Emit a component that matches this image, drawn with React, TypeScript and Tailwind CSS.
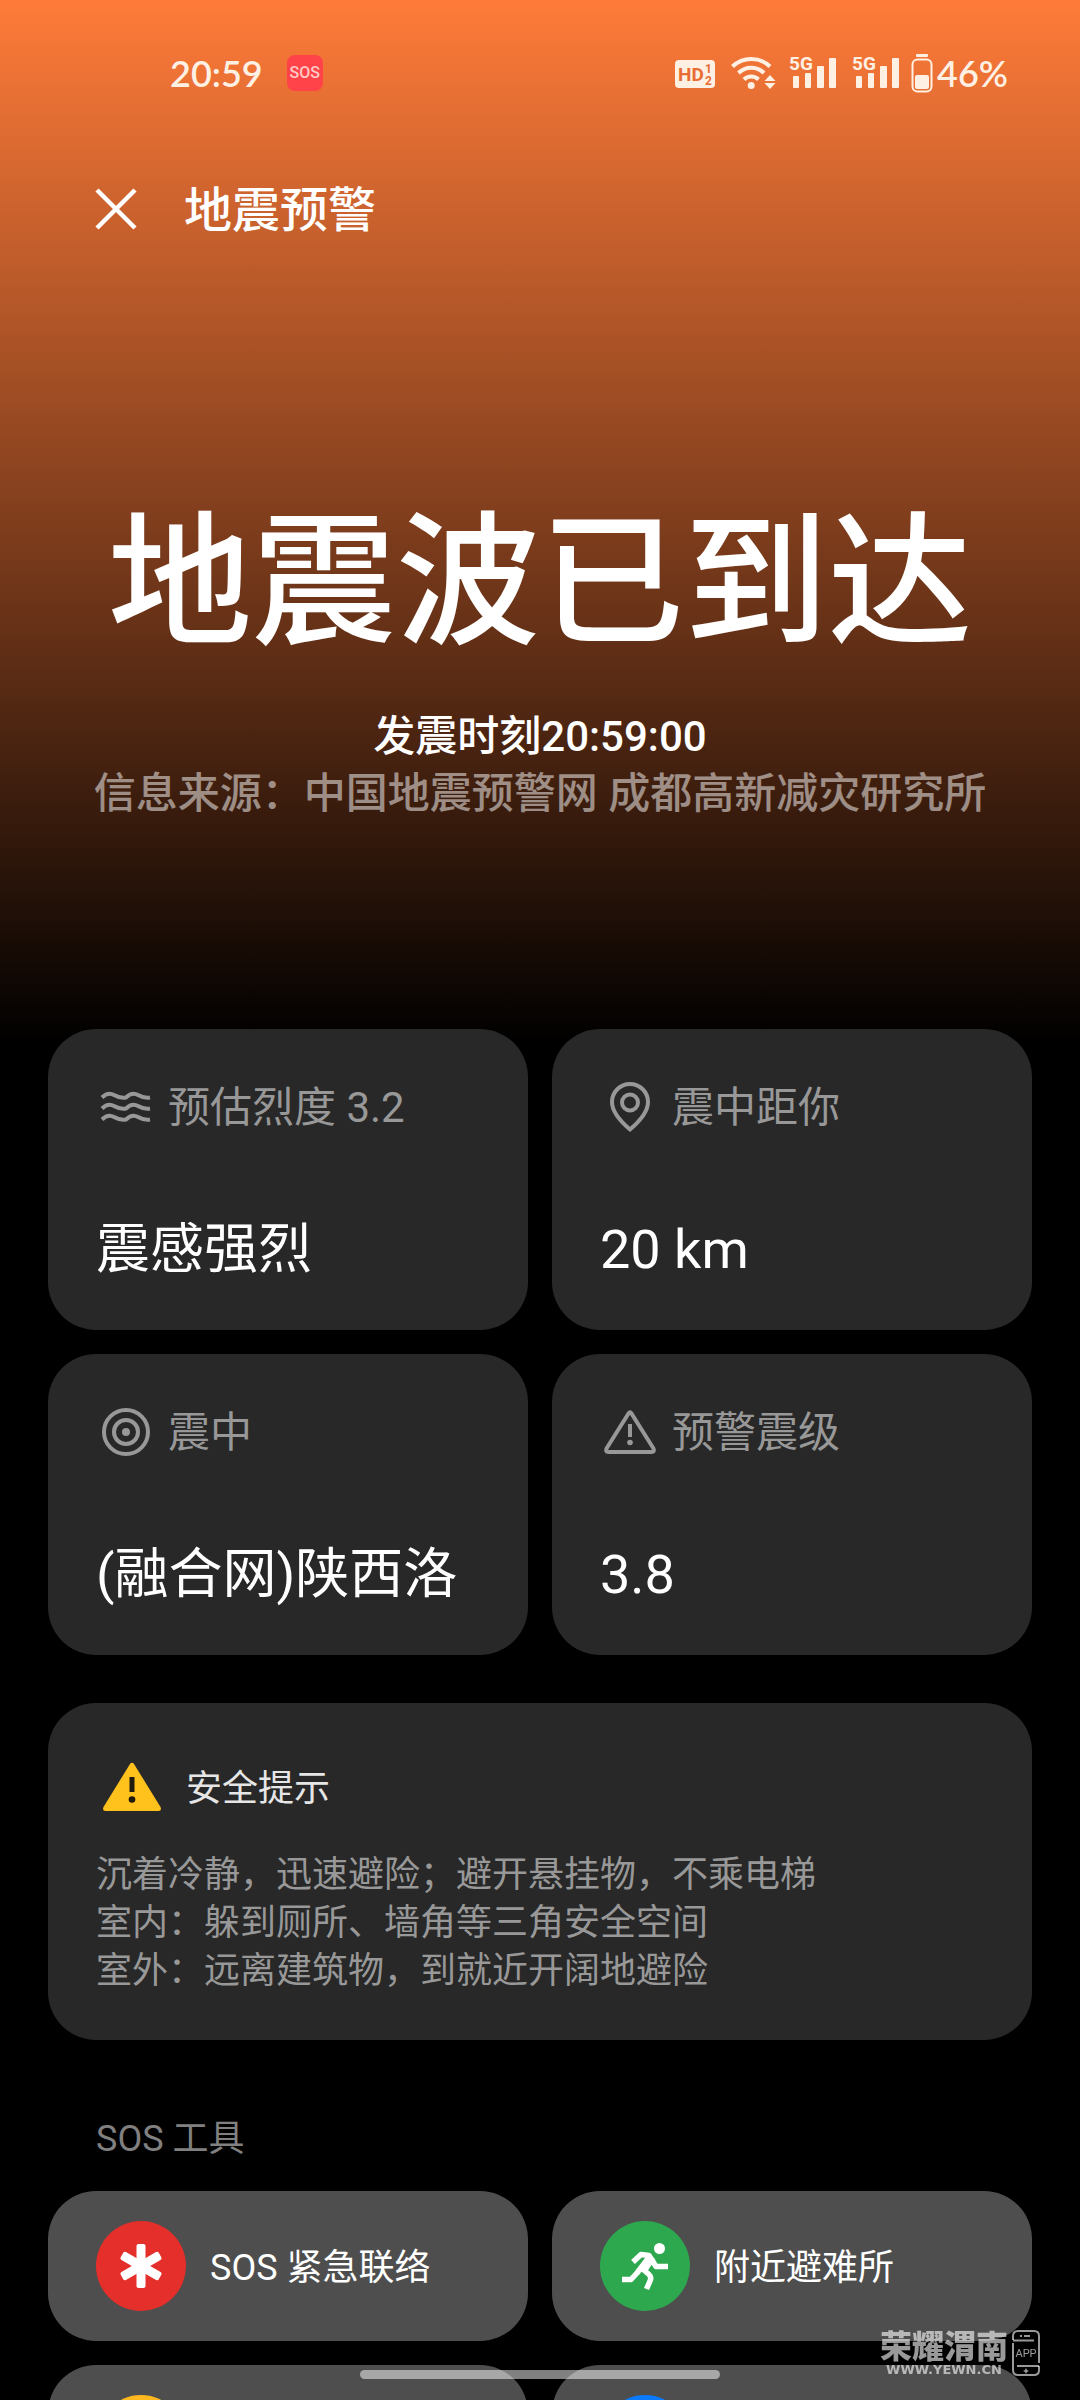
import type { ReactNode } from "react";

const StatusBar = () => (
  <div className="flex items-center justify-between h-36 pt-[2px] pl-[170px] pr-[72px] text-[#fff0e4] font-['Lato',sans-serif] text-4xl font-semibold">
    <div className="flex items-center gap-6">
      <span>20:59</span>
      <span className="flex items-center justify-center size-9 rounded-lg bg-[#ff4348] text-[#ffc9c4] text-base font-medium font-['Roboto',sans-serif]">
        SOS
      </span>
    </div>
    <div className="flex items-center">
      <HdIcon />
      <WifiIcon />
      <SignalIcon />
      <SignalIcon />
      <BatteryIcon />
      <span className="ml-1">46%</span>
    </div>
  </div>
);

const HdIcon = () => (
  <svg width="40" height="40" viewBox="0 0 40 40" className="mr-4">
    <rect x="0" y="7" width="40" height="28" rx="4" fill="currentColor" />
    <g fill="#e96d33" fontFamily="Roboto, sans-serif" fontWeight="700">
      <text x="3" y="28" fontSize="19">HD</text>
      <text x="30" y="20" fontSize="12">1</text>
      <text x="30" y="32" fontSize="12">2</text>
    </g>
  </svg>
);

const WifiIcon = () => (
  <svg width="46" height="40" viewBox="0 0 46 40" fill="none" className="mr-3">
    <g stroke="currentColor" strokeWidth="4">
      <path d="M1.500 13.500a27 27 0 0 1 37.500 0" />
      <path d="M7.500 20a18 18 0 0 1 25.500 0" />
      <path d="M13 26.500a10 10 0 0 1 14.500 0" />
    </g>
    <circle cx="20.200" cy="32.500" r="3.500" fill="currentColor" />
    <path d="M39 22l5.500 6h-11zM39 36l5.500-6h-11z" fill="currentColor" />
  </svg>
);

const SignalIcon = () => (
  <svg width="48" height="40" viewBox="0 0 48 40" className="mr-[15px]">
    <text x="0" y="17" fontSize="19" fontFamily="Roboto, sans-serif" fontWeight="700" fill="currentColor">
      5G
    </text>
    <g fill="currentColor">
      <rect x="4" y="23" width="6" height="12" rx="1" />
      <rect x="16" y="20" width="6" height="15" rx="1" />
      <rect x="28" y="13" width="7" height="22" rx="1" />
      <rect x="40" y="5" width="7" height="30" rx="1" />
    </g>
  </svg>
);

const BatteryIcon = () => (
  <svg width="22" height="40" viewBox="0 0 22 40" className="-ml-1">
    <rect x="5" y="1" width="12" height="3" rx="1" fill="currentColor" />
    <rect x="1.500" y="6.500" width="19" height="32" rx="5" fill="none" stroke="currentColor" strokeWidth="2" />
    <rect x="4" y="22" width="14" height="14" rx="2" fill="currentColor" />
  </svg>
);

const WavesIcon = () => (
  <svg width="60" height="60" viewBox="0 0 60 60" fill="none" stroke="currentColor" strokeWidth="4">
    <path d="M6 20.500q6-6 12-2.500t12 2.500q6-6 12-2.500t12 2.500" />
    <path d="M6 31.500q6-6 12-2.500t12 2.500q6-6 12-2.500t12 2.500" />
    <path d="M6 42.500q6-6 12-2.500t12 2.500q6-6 12-2.500t12 2.500" />
  </svg>
);

const PinIcon = () => (
  <svg width="60" height="60" viewBox="0 0 60 60" fill="none" stroke="currentColor" strokeWidth="4">
    <path d="M30 52.500C20 44 12 35 12 25a18 18 0 0 1 36 0c0 10-8 19-18 27.500z" />
    <circle cx="30" cy="25.500" r="8" />
  </svg>
);

const EpicenterIcon = () => (
  <svg width="60" height="60" viewBox="0 0 60 60" fill="none" stroke="currentColor" strokeWidth="4">
    <circle cx="30" cy="30" r="22" />
    <circle cx="30" cy="30" r="12" />
    <circle cx="30" cy="30" r="4" fill="currentColor" stroke="none" />
  </svg>
);

const WarningIcon = () => (
  <svg width="60" height="60" viewBox="0 0 60 60" fill="none" stroke="currentColor" strokeWidth="4" strokeLinejoin="round">
    <path d="M28.500 11.500q1.500-2.500 3 0l22 35q1.500 3.500-2 3.500h-43q-3.500 0-2-3.500z" />
    <path d="M30 22v13" />
    <circle cx="30" cy="40.500" r="2.800" fill="currentColor" stroke="none" />
  </svg>
);

const AlertIcon = () => (
  <svg width="72" height="60" viewBox="0 0 72 60">
    <path d="M34 7q2-2.500 4 0l26.500 43q1.500 4-2 4h-53q-3.500 0-2-4z" fill="#ffc21c" />
    <path d="M36 20v15" stroke="#1f1a10" strokeWidth="5" />
    <circle cx="36" cy="42.500" r="3.300" fill="#1f1a10" />
  </svg>
);

const AsteriskIcon = () => (
  <svg width="90" height="90" viewBox="0 0 90 90" fill="white">
    <rect x="40.500" y="23" width="9" height="44" rx="2" />
    <rect x="40.500" y="23" width="9" height="44" rx="2" transform="rotate(60 45 45)" />
    <rect x="40.500" y="23" width="9" height="44" rx="2" transform="rotate(-60 45 45)" />
  </svg>
);

const RunnerIcon = () => (
  <svg width="90" height="90" viewBox="0 0 90 90" fill="none" stroke="white" strokeWidth="5.500" strokeLinejoin="round">
    <circle cx="59.500" cy="27.500" r="5.500" fill="white" stroke="none" />
    <path d="M33 41l8-7.500 8 1 7 11h12" />
    <path d="M50 35L37 52l-6 6.500h-9" />
    <path d="M52 36l-8 12" strokeWidth="8" />
    <path d="M42 47.500l6.500 5.500q3.500 3 1.500 7l-3.500 8" />
  </svg>
);

const InfoCard = ({ icon, label, value }: { icon: ReactNode; label: string; value: string }) => (
  <div className="flex flex-col justify-between h-[301px] min-w-0 rounded-[48px] bg-[#282828] px-12 pt-12 pb-11">
    <div className="flex items-center gap-3 h-[60px] text-[42px] leading-[60px] text-[#989898] whitespace-nowrap">
      {icon}
      <span className="pt-[2px]">{label}</span>
    </div>
    <p className="text-[54px] leading-[72px] whitespace-nowrap">{value}</p>
  </div>
);

const ToolButton = ({
  color,
  label,
  name,
  children,
}: {
  color: string;
  label?: string;
  name?: string;
  children?: ReactNode;
}) => (
  <button
    type="button"
    aria-label={name}
    className="flex items-center gap-6 h-[150px] rounded-[48px] bg-[#4e4e4e] px-12 text-4xl whitespace-nowrap"
  >
    <span className={`size-[90px] shrink-0 rounded-full ${color}`}>{children}</span>
    {label && <span className="pt-1">{label}</span>}
  </button>
);

const Watermark = () => (
  <div className="absolute right-10 bottom-6 flex items-center gap-1 text-white/60">
    <div className="flex flex-col">
      <span className="text-[32px] leading-[34px] font-black">荣耀渭南</span>
      <span className="text-[13px] leading-3 font-bold text-center font-['DejaVu_Sans',sans-serif]">WWW.YEWN.CN</span>
    </div>
    <svg width="28" height="46" viewBox="0 0 28 46" fill="none" stroke="currentColor" strokeWidth="2">
      <path d="M1 10V6q0-5 5-5h16q5 0 5 5v27M1 13v27q0 5 5 5h16q5 0 5-5v-4" />
      <path d="M1 10.500h21M5 36h22M8 6h2M12 6h6" />
      <path d="M14 38l1 2 2 1-2 1-1 2-1-2-2-1 2-1z" fill="currentColor" stroke="none" />
      <text x="3.500" y="27" fontSize="11" fontFamily="Roboto, sans-serif" fill="currentColor" stroke="none">
        APP
      </text>
    </svg>
  </div>
);

const tips = [
  "沉着冷静，迅速避险；避开悬挂物，不乘电梯",
  "室内：躲到厕所、墙角等三角安全空间",
  "室外：远离建筑物，到就近开阔地避险",
];

export default function App() {
  return (
    <div
      lang="zh-CN"
      className="relative h-screen overflow-hidden bg-black text-white font-['Roboto','Noto_Sans_CJK_SC',sans-serif]"
    >
      <div className="h-full overflow-y-auto [scrollbar-width:none]">
        <div className="bg-linear-to-b/srgb from-[#ff7b39] to-black to-[1044px]">
          <StatusBar />
          <header className="flex items-center gap-[46px] h-[130px] pl-[94px]">
            <button type="button" aria-label="关闭">
              <svg width="44" height="44" viewBox="0 0 44 44" stroke="currentColor" strokeWidth="4.500">
                <path d="M3 3l38 38M41 3L3 41" />
              </svg>
            </button>
            <h1 className="pt-1 text-5xl font-medium">地震预警</h1>
          </header>
          <section className="pt-[226px] text-center whitespace-nowrap">
            <h2 className="text-[144px] leading-[168px] font-medium">地震波已到达</h2>
            <p className="pt-10 text-[42px] leading-[57px] font-medium">发震时刻20:59:00</p>
            <p className="text-[42px] leading-[57px] font-medium text-white/50">
              信息来源：中国地震预警网 成都高新减灾研究所
            </p>
          </section>

          <main className="px-12 pt-[207px]">
            <div className="grid grid-cols-2 gap-6">
              <InfoCard icon={<WavesIcon />} label="预估烈度 3.2" value="震感强烈" />
              <InfoCard icon={<PinIcon />} label="震中距你" value="20 km" />
              <InfoCard icon={<EpicenterIcon />} label="震中" value="(融合网)陕西洛" />
              <InfoCard icon={<WarningIcon />} label="预警震级" value="3.8" />
            </div>

            <section className="mt-12 rounded-[48px] bg-[#282828] px-12 pt-[54px] pb-[45px] text-4xl">
              <div className="flex items-center gap-[18px]">
                <AlertIcon />
                <h3 className="pt-1 text-[#e6e6e6]">安全提示</h3>
              </div>
              <div className="pt-[34px] leading-12 text-[#989898]">
                {tips.map((tip) => (
                  <p key={tip}>{tip}</p>
                ))}
              </div>
            </section>

            <h3 className="pt-[75px] pb-7 pl-12 text-4xl leading-12 text-[#808080]">SOS 工具</h3>
            <div className="grid grid-cols-2 gap-6 pb-12">
              <ToolButton color="bg-[#e52f2a]" label="SOS 紧急联络">
                <AsteriskIcon />
              </ToolButton>
              <ToolButton color="bg-[#2ea84f]" label="附近避难所">
                <RunnerIcon />
              </ToolButton>
              <ToolButton color="bg-[#ffb91f]" name="更多工具" />
              <ToolButton color="bg-[#0a7aff]" name="其他工具" />
            </div>
          </main>
        </div>
      </div>

      <div className="absolute bottom-[21px] left-1/3 w-1/3 h-[9px] rounded-full bg-white/50" />
      <Watermark />
    </div>
  );
}
